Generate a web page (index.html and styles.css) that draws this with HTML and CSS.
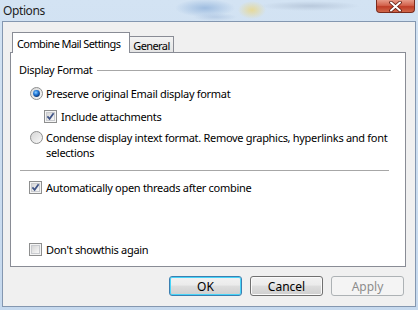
FILE: index.html
```html
<!DOCTYPE html>
<html lang="en">
	<head>
		<meta charset="UTF-8" />
		<title>Options</title>
		<link rel="stylesheet" href="styles.css">
	</head>
	<body>
		<div class="window">
			<div class="titlebar">
				<span class="title">Options</span>
				<span class="close">
					<svg width="13" height="11" viewBox="0 0 13 11">
						<path d="M2 1.5 L11 9.5 M11 1.5 L2 9.5" stroke="#5a1a10" stroke-width="3.6" stroke-linecap="round" />
						<path d="M2 1.5 L11 9.5 M11 1.5 L2 9.5" stroke="#ffffff" stroke-width="2" stroke-linecap="round" />
					</svg>
				</span>
			</div>

			<div class="client">
				<div class="tabs">
					<div class="tab active">Combine Mail Settings</div>
					<div class="tab">General</div>
				</div>

				<div class="panel">
					<div class="group-title">
						<span>Display Format</span>
						<span class="rule"></span>
					</div>

					<label class="option radio-row first">
						<svg class="mark" width="13" height="13" viewBox="0 0 13 13">
							<defs>
								<radialGradient id="dot" cx="0.4" cy="0.35" r="0.7">
									<stop offset="0" stop-color="#8fd0ff" />
									<stop offset="0.5" stop-color="#1d74d6" />
									<stop offset="1" stop-color="#0c2e66" />
								</radialGradient>
								<linearGradient id="rbg" x1="0" y1="0" x2="1" y2="1">
									<stop offset="0" stop-color="#d4d4d4" />
									<stop offset="1" stop-color="#fafafa" />
								</linearGradient>
							</defs>
							<circle cx="6.5" cy="6.5" r="6" fill="url(#rbg)" stroke="#8e8f8f" />
							<circle cx="6.5" cy="6.5" r="3.4" fill="url(#dot)" />
						</svg>
						<span>Preserve original Email display format</span>
					</label>

					<label class="option sub">
						<svg class="mark" width="13" height="13" viewBox="0 0 13 13">
							<rect x="0.5" y="0.5" width="12" height="12" fill="#f4f4f4" stroke="#8e8f8f" />
							<rect x="2.5" y="2.5" width="8" height="8" fill="url(#rbg)" stroke="#c9cbcf" />
							<path d="M3.4 6.4 L5.6 8.8 L9.6 3.2" fill="none" stroke="#3e5386" stroke-width="1.7" />
						</svg>
						<span>Include attachments</span>
					</label>

					<label class="option radio-row second">
						<svg class="mark" width="13" height="13" viewBox="0 0 13 13">
							<circle cx="6.5" cy="6.5" r="6" fill="url(#rbg)" stroke="#8e8f8f" />
						</svg>
						<span>Condense display intext format. Remove graphics, hyperlinks and font<br>selections</span>
					</label>

					<div class="separator"></div>

					<label class="option auto">
						<svg class="mark" width="13" height="13" viewBox="0 0 13 13">
							<rect x="0.5" y="0.5" width="12" height="12" fill="#f4f4f4" stroke="#8e8f8f" />
							<rect x="2.5" y="2.5" width="8" height="8" fill="url(#rbg)" stroke="#c9cbcf" />
							<path d="M3.4 6.4 L5.6 8.8 L9.6 3.2" fill="none" stroke="#3e5386" stroke-width="1.7" />
						</svg>
						<span>Automatically open threads after combine</span>
					</label>

					<label class="option dont">
						<svg class="mark" width="13" height="13" viewBox="0 0 13 13">
							<rect x="0.5" y="0.5" width="12" height="12" fill="#f4f4f4" stroke="#8e8f8f" />
							<rect x="2.5" y="2.5" width="8" height="8" fill="url(#rbg)" stroke="#c9cbcf" />
						</svg>
						<span>Don't showthis again</span>
					</label>
				</div>

				<div class="buttons">
					<button class="btn default">OK</button>
					<button class="btn">Cancel</button>
					<button class="btn" disabled>Apply</button>
				</div>
			</div>
		</div>
	</body>
</html>
```

FILE: styles.css
```css
body {
	margin: 0;
	font-family: 'Noto Sans', 'Open Sans', sans-serif;
	font-size: 11px;
	letter-spacing: -0.3px;
	color: #000;
}

.window {
	width: 418px;
	height: 310px;
	display: flex;
	flex-direction: column;
	background:
		radial-gradient(ellipse 30px 9px at 205px 8px, #9fbde0, transparent),
		radial-gradient(ellipse 14px 9px at 252px 10px, #e6d99a, transparent),
		radial-gradient(ellipse 50px 5px at 310px 6px, #b9c9dc, transparent),
		radial-gradient(ellipse 22px 4px at 215px 17px, #b8cde6, transparent),
		linear-gradient(#d3e3f3, #c6d9ee);
}

.titlebar {
	height: 21px;
	display: flex;
	justify-content: space-between;
	align-items: flex-start;
	padding: 0 3px 0 3px;
	box-sizing: border-box;
}

.title {
	margin-top: 3px;
	font-size: 12px;
	letter-spacing: -0.4px;
	line-height: 15px;
	color: #1e1e1e;
}

.close {
	width: 39px;
	height: 13px;
	box-sizing: border-box;
	border: 1px solid #7b2b1d;
	border-top: none;
	border-radius: 0 0 4px 4px;
	background: linear-gradient(#e79a88, #d3634d 45%, #bf3d27 55%, #d0674a);
	display: flex;
	align-items: center;
	justify-content: center;
}

.client {
	flex: 1;
	margin: 0 2px 3px 2px;
	border: 1px solid #8497b0;
	background: #f0f0f0;
	padding: 10px 9px 0 7px;
	display: flex;
	flex-direction: column;
}

.tabs {
	display: flex;
	align-items: flex-end;
	padding-left: 2px;
	margin-bottom: -1px;
}

.tab {
	height: 17px;
	padding: 0 3px 0 3px;
	display: flex;
	align-items: center;
	letter-spacing: -0.6px;
	border: 1px solid #898c95;
	border-left: none;
	border-bottom: none;
	background: linear-gradient(#f3f3f3, #e3e3e3);
	box-sizing: border-box;
}

.tab.active {
	height: 21px;
	padding: 0 9px 0 4px;
	letter-spacing: -0.6px;
	border-left: 1px solid #898c95;
	background: #fff;
	position: relative;
	z-index: 1;
}

.panel {
	height: 215px;
	box-sizing: border-box;
	border: 1px solid #898c95;
	background: #fff;
	padding: 10px 8px 0 8px;
	display: flex;
	flex-direction: column;
}

.group-title {
	display: flex;
	align-items: center;
	gap: 4px;
	line-height: 13px;
}

.rule {
	flex: 1;
	height: 1px;
	background: #a7a7a7;
	margin: 2px 6px 0 0;
}

.option {
	display: flex;
	align-items: flex-start;
	gap: 3px;
	line-height: 13px;
	padding-left: 11px;
	white-space: nowrap;
}

.mark {
	flex: none;
}

.radio-row.first {
	margin-top: 11px;
}

.sub {
	margin-top: 10px;
	padding-left: 25px;
	gap: 4px;
}

.radio-row.second {
	margin-top: 7px;
	line-height: 15px;
}

.radio-row.second .mark {
	margin-top: 1px;
}

.separator {
	height: 1px;
	background: #a7a7a7;
	margin: 10px 8px 0 1px;
}

.auto {
	margin-top: 10px;
	padding-left: 10px;
	gap: 4px;
}

.dont {
	margin-top: 49px;
	padding-left: 10px;
	gap: 4px;
}

.buttons {
	display: flex;
	justify-content: flex-end;
	gap: 8px;
	margin-top: 9px;
	padding-right: 2px;
}

.btn {
	width: 73px;
	height: 20px;
	padding: 0;
	font-family: inherit;
	font-size: 12px;
	letter-spacing: 0;
	color: #000;
	border: 1px solid #707070;
	border-radius: 3px;
	background: linear-gradient(#f2f2f2, #ebebeb 45%, #dddddd 50%, #cfcfcf);
	box-shadow: inset 0 0 0 1px #fafafa;
}

.btn.default {
	border-color: #3c7fb1;
	box-shadow: inset 0 0 0 1px #48d4f8;
}

.btn:disabled {
	color: #8c8c8c;
	border-color: #adb2b5;
	background: #f4f4f4;
	box-shadow: none;
}
```
